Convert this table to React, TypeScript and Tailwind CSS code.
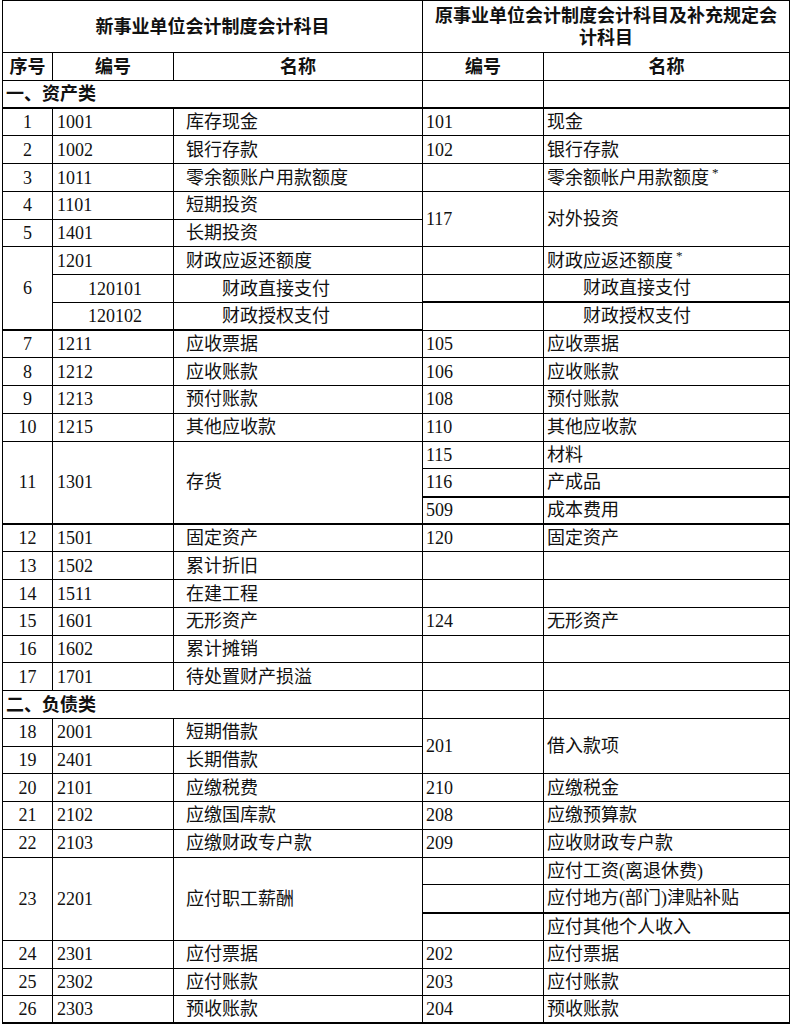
import React from 'react';

type Cell = {
  text?: React.ReactNode;
  colSpan?: number;
  rowSpan?: number;
  cls?: string;
};

// column styles
const SEQ = 'text-center';
const CODE = 'pl-[4px]';
const NAME = 'pl-[12px]';
const OCODE = 'pl-[3px]';
const ONAME = 'pl-[3px]';
// thicker rule lines, as in the scanned sheet
const T = ' border-t-2';

const Star = () => <span className="ml-[3px] text-[13px] align-top relative -top-[3px]">*</span>;

const rows: Cell[][] = [
  [{ text: '一、资产类', colSpan: 3, cls: 'pl-[3px] font-bold' }, {}, {}],
  [{ text: '1', cls: SEQ + T }, { text: '1001', cls: CODE + T }, { text: '库存现金', cls: NAME + T }, { text: '101', cls: OCODE + T }, { text: '现金', cls: ONAME + T }],
  [{ text: '2', cls: SEQ }, { text: '1002', cls: CODE }, { text: '银行存款', cls: NAME }, { text: '102', cls: OCODE }, { text: '银行存款', cls: ONAME }],
  [{ text: '3', cls: SEQ }, { text: '1011', cls: CODE }, { text: '零余额账户用款额度', cls: NAME }, {}, { text: <>零余额帐户用款额度<Star /></>, cls: ONAME }],
  [{ text: '4', cls: SEQ }, { text: '1101', cls: CODE }, { text: '短期投资', cls: NAME }, { text: '117', rowSpan: 2, cls: OCODE }, { text: '对外投资', rowSpan: 2, cls: ONAME }],
  [{ text: '5', cls: SEQ }, { text: '1401', cls: CODE }, { text: '长期投资', cls: NAME }],
  [{ text: '6', rowSpan: 3, cls: SEQ }, { text: '1201', cls: CODE }, { text: '财政应返还额度', cls: NAME }, {}, { text: <>财政应返还额度<Star /></>, cls: ONAME }],
  [{ text: '120101', cls: 'pl-[35px]' }, { text: '财政直接支付', cls: 'pl-[48px]' }, {}, { text: '财政直接支付', cls: 'pl-[39px]' }],
  [{ text: '120102', cls: 'pl-[35px]' }, { text: '财政授权支付', cls: 'pl-[48px]' }, { cls: T }, { text: '财政授权支付', cls: 'pl-[39px]' + T }],
  [{ text: '7', cls: SEQ + T }, { text: '1211', cls: CODE + T }, { text: '应收票据', cls: NAME + T }, { text: '105', cls: OCODE }, { text: '应收票据', cls: ONAME }],
  [{ text: '8', cls: SEQ }, { text: '1212', cls: CODE }, { text: '应收账款', cls: NAME }, { text: '106', cls: OCODE }, { text: '应收账款', cls: ONAME }],
  [{ text: '9', cls: SEQ }, { text: '1213', cls: CODE }, { text: '预付账款', cls: NAME }, { text: '108', cls: OCODE }, { text: '预付账款', cls: ONAME }],
  [{ text: '10', cls: SEQ }, { text: '1215', cls: CODE }, { text: '其他应收款', cls: NAME }, { text: '110', cls: OCODE }, { text: '其他应收款', cls: ONAME }],
  [{ text: '11', rowSpan: 3, cls: SEQ }, { text: '1301', rowSpan: 3, cls: CODE }, { text: '存货', rowSpan: 3, cls: NAME }, { text: '115', cls: OCODE }, { text: '材料', cls: ONAME }],
  [{ text: '116', cls: OCODE }, { text: '产成品', cls: ONAME }],
  [{ text: '509', cls: OCODE + T }, { text: '成本费用', cls: ONAME + T }],
  [{ text: '12', cls: SEQ + T }, { text: '1501', cls: CODE + T }, { text: '固定资产', cls: NAME + T }, { text: '120', cls: OCODE + T }, { text: '固定资产', cls: ONAME + T }],
  [{ text: '13', cls: SEQ }, { text: '1502', cls: CODE }, { text: '累计折旧', cls: NAME }, {}, {}],
  [{ text: '14', cls: SEQ }, { text: '1511', cls: CODE }, { text: '在建工程', cls: NAME }, {}, {}],
  [{ text: '15', cls: SEQ }, { text: '1601', cls: CODE }, { text: '无形资产', cls: NAME }, { text: '124', cls: OCODE }, { text: '无形资产', cls: ONAME }],
  [{ text: '16', cls: SEQ }, { text: '1602', cls: CODE }, { text: '累计摊销', cls: NAME }, {}, {}],
  [{ text: '17', cls: SEQ }, { text: '1701', cls: CODE }, { text: '待处置财产损溢', cls: NAME }, {}, {}],
  [{ text: '二、负债类', colSpan: 3, cls: 'pl-[3px] font-bold' }, {}, {}],
  [{ text: '18', cls: SEQ }, { text: '2001', cls: CODE }, { text: '短期借款', cls: NAME }, { text: '201', rowSpan: 2, cls: OCODE }, { text: '借入款项', rowSpan: 2, cls: ONAME }],
  [{ text: '19', cls: SEQ }, { text: '2401', cls: CODE }, { text: '长期借款', cls: NAME }],
  [{ text: '20', cls: SEQ }, { text: '2101', cls: CODE }, { text: '应缴税费', cls: NAME }, { text: '210', cls: OCODE }, { text: '应缴税金', cls: ONAME }],
  [{ text: '21', cls: SEQ }, { text: '2102', cls: CODE }, { text: '应缴国库款', cls: NAME }, { text: '208', cls: OCODE }, { text: '应缴预算款', cls: ONAME }],
  [{ text: '22', cls: SEQ }, { text: '2103', cls: CODE }, { text: '应缴财政专户款', cls: NAME }, { text: '209', cls: OCODE }, { text: '应收财政专户款', cls: ONAME }],
  [{ text: '23', rowSpan: 3, cls: SEQ }, { text: '2201', rowSpan: 3, cls: CODE }, { text: '应付职工薪酬', rowSpan: 3, cls: NAME }, {}, { text: '应付工资(离退休费)', cls: ONAME }],
  [{}, { text: '应付地方(部门)津贴补贴', cls: ONAME }],
  [{ cls: T }, { text: '应付其他个人收入', cls: ONAME + T }],
  [{ text: '24', cls: SEQ }, { text: '2301', cls: CODE }, { text: '应付票据', cls: NAME }, { text: '202', cls: OCODE }, { text: '应付票据', cls: ONAME }],
  [{ text: '25', cls: SEQ }, { text: '2302', cls: CODE }, { text: '应付账款', cls: NAME }, { text: '203', cls: OCODE }, { text: '应付账款', cls: ONAME }],
  [{ text: '26', cls: SEQ + ' border-b-2' }, { text: '2303', cls: CODE + ' border-b-2' }, { text: '预收账款', cls: NAME + ' border-b-2' }, { text: '204', cls: OCODE + ' border-b-2' }, { text: '预收账款', cls: ONAME + ' border-b-2' }],
];

const App: React.FC = () => {
  return (
    <div className="w-[793px] h-[1025px] overflow-hidden bg-white text-[#111] font-['Liberation_Serif','Noto_Sans_CJK_SC',serif]">
      <table className="table-fixed border-collapse ml-[2px] text-[18px] leading-none">
        <colgroup>
          <col className="w-[50px]" />
          <col className="w-[121px]" />
          <col className="w-[249px]" />
          <col className="w-[121px]" />
          <col className="w-[246px]" />
        </colgroup>
        <thead>
          <tr className="h-[52px]">
            <th colSpan={3} className="border border-black font-bold text-center">新事业单位会计制度会计科目</th>
            <th colSpan={2} className="border border-black font-bold text-center leading-[22px]">
              原事业单位会计制度会计科目及补充规定会
              <br />
              计科目
            </th>
          </tr>
          <tr className="h-[28px]">
            <th className="border border-black font-bold text-center">序号</th>
            <th className="border border-black font-bold text-center">编号</th>
            <th className="border border-black font-bold text-center">名称</th>
            <th className="border border-black font-bold text-center">编号</th>
            <th className="border border-black font-bold text-center">名称</th>
          </tr>
        </thead>
        <tbody>
          {rows.map((r, i) => (
            <tr key={i} className="h-[27.74px]">
              {r.map((c, j) => (
                <td
                  key={j}
                  colSpan={c.colSpan}
                  rowSpan={c.rowSpan}
                  className={`border border-black whitespace-nowrap overflow-hidden align-middle p-0 ${c.cls ?? ''}`}
                >
                  {c.text}
                </td>
              ))}
            </tr>
          ))}
        </tbody>
      </table>
    </div>
  );
};

export default App;
